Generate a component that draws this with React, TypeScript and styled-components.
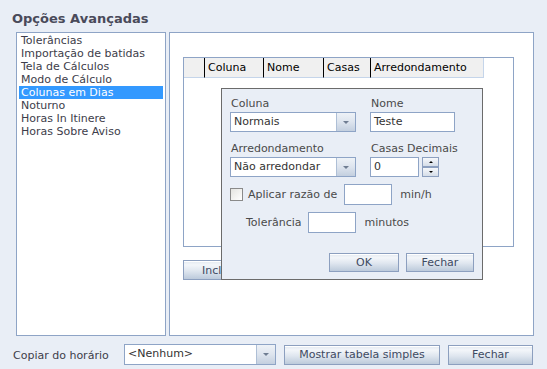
import React from 'react';
import styled, { createGlobalStyle } from 'styled-components';

const GlobalStyle = createGlobalStyle`
  html, body {
    margin: 0;
    padding: 0;
    background: #e9eef6;
  }
  * {
    box-sizing: border-box;
  }
`;

const Root = styled.div`
  width: 547px;
  height: 369px;
  background: #e9eef6;
  display: flex;
  flex-direction: column;
  font-family: 'DejaVu Sans', Verdana, sans-serif;
  font-size: 11px;
  color: #3d3d4a;
  overflow: hidden;
`;

const Title = styled.h1`
  margin: 0;
  padding: 11px 0 0 12px;
  height: 32px;
  font-size: 13px;
  line-height: 16px;
  font-weight: 700;
  color: #4a4a5a;
`;

const Main = styled.div`
  display: flex;
  column-gap: 3px;
  margin-left: 16px;
  height: 304px;
`;

const OptionList = styled.ul`
  list-style: none;
  margin: 0;
  width: 150px;
  height: 100%;
  padding: 1px 2px;
  background: #fff;
  border: 1px solid #8ea4c6;
`;

const OptionItem = styled.li<{ $selected?: boolean }>`
  height: 13px;
  line-height: 13px;
  padding-left: 2px;
  white-space: nowrap;
  background: ${(p) => (p.$selected ? '#3399ff' : 'transparent')};
  color: ${(p) => (p.$selected ? '#fff' : '#3d3d4a')};
`;

const Panel = styled.div`
  position: relative;
  width: 365px;
  height: 100%;
  padding: 24px 0 0 13px;
  background: #fff;
  border: 1px solid #8ea4c6;
`;

const Grid = styled.div`
  width: 331px;
  height: 190px;
  border: 1px solid #8ea4c6;
  background: #fff;
`;

const HeaderRow = styled.div`
  display: flex;
  height: 20px;
`;

const HeaderCell = styled.div<{ $width: number; $first?: boolean }>`
  flex: none;
  width: ${(p) => p.$width}px;
  height: 20px;
  line-height: 19px;
  padding-left: 3px;
  background: #f0f0f0;
  color: #000;
  border-left: ${(p) => (p.$first ? 'none' : '1px solid #000')};
  border-bottom: 1px solid #c5d5ea;
  white-space: nowrap;
  &:last-child {
    border-right: 1px solid #c5d5ea;
  }
`;

const Button = styled.button<{ $width: number }>`
  width: ${(p) => p.$width}px;
  height: 19px;
  padding: 0;
  font-family: 'DejaVu Sans', Verdana, sans-serif;
  font-size: 11px;
  color: #3e4a62;
  border: 1px solid #8c9fbf;
  box-shadow: inset 0 1px 0 #fff;
  background: linear-gradient(
    to bottom,
    #e2e8f0 0%,
    #f3f6fa 22%,
    #dfe6ef 55%,
    #bccadb 100%
  );
`;

const IncludeButton = styled(Button)`
  display: block;
  margin-top: 13px;
  height: 20px;
  text-align: left;
  padding-left: 18px;
`;

const Dialog = styled.div`
  position: absolute;
  left: 51px;
  top: 55px;
  width: 262px;
  height: 192px;
  border: 1px solid #6b6b6b;
  background: #e9eef6;
  padding: 8px 8px 7px 8px;
  display: flex;
  flex-direction: column;
`;

const FieldGrid = styled.div`
  display: grid;
  grid-template-columns: 126px 1fr;
  column-gap: 14px;
  row-gap: 10px;
`;

const Field = styled.div`
  display: flex;
  flex-direction: column;
  row-gap: 2px;
`;

const Label = styled.span`
  display: block;
  height: 13px;
  line-height: 13px;
  padding-left: 1px;
  color: #4a4a4a;
  white-space: nowrap;
`;

const SelectBox = styled.div<{ $width: number; $height?: number }>`
  display: flex;
  width: ${(p) => p.$width}px;
  height: ${(p) => p.$height ?? 20}px;
  border: 1px solid #8ea4c6;
  background: #fff;
`;

const SelectValue = styled.span`
  flex: 1;
  padding-left: 3px;
  line-height: 18px;
  color: #333;
  white-space: nowrap;
  overflow: hidden;
`;

const DropButton = styled.span`
  width: 19px;
  display: flex;
  align-items: center;
  justify-content: center;
  border-left: 1px solid #aebfd6;
  background: linear-gradient(to bottom, #eef2f7 0%, #dde4ee 50%, #c3cfdf 100%);
  &::after {
    content: '';
    border-left: 3px solid transparent;
    border-right: 3px solid transparent;
    border-top: 3px solid #6f7d92;
  }
`;

const TextInput = styled.div<{ $width: number; $height?: number }>`
  width: ${(p) => p.$width}px;
  height: ${(p) => p.$height ?? 20}px;
  border: 1px solid #8ea4c6;
  background: #fff;
  padding-left: 3px;
  line-height: 18px;
  color: #333;
`;

const SpinRow = styled.div`
  display: flex;
  column-gap: 3px;
`;

const Spinner = styled.div`
  display: flex;
  flex-direction: column;
  width: 17px;
  height: 20px;
`;

const SpinButton = styled.span<{ $up?: boolean }>`
  flex: 1;
  display: flex;
  align-items: center;
  justify-content: center;
  border: 1px solid #8c9fbf;
  background: linear-gradient(to bottom, #f6f8fb, #d5dde8);
  &::after {
    content: '';
    border-left: 2px solid transparent;
    border-right: 2px solid transparent;
    ${(p) => (p.$up ? 'border-bottom: 2px solid #000;' : 'border-top: 2px solid #000;')}
  }
`;

const OptionRow = styled.div<{ $indent?: number }>`
  display: flex;
  align-items: center;
  margin-top: 7px;
  padding-left: ${(p) => p.$indent ?? 0}px;
  color: #4a4a4a;
  white-space: nowrap;
`;

const Checkbox = styled.span`
  width: 13px;
  height: 13px;
  border: 1px solid #8a8a8a;
  background: linear-gradient(135deg, #e4e4e0, #fff);
  margin-right: 5px;
`;

const InlineInput = styled(TextInput)`
  margin: 0 8px 0 7px;
`;

const DialogActions = styled.div`
  margin-top: auto;
  display: flex;
  justify-content: flex-end;
  column-gap: 7px;
`;

const Footer = styled.div`
  display: flex;
  align-items: center;
  margin-top: 8px;
  padding-left: 12px;
  height: 21px;
`;

const FooterLabel = styled.span`
  width: 112px;
  padding-left: 1px;
  line-height: 21px;
  padding-top: 2px;
  color: #3d3d4a;
  white-space: nowrap;
`;

const FooterButton = styled(Button)`
  height: 20px;
  margin-left: 8px;
`;

const options = [
  'Tolerâncias',
  'Importação de batidas',
  'Tela de Cálculos',
  'Modo de Cálculo',
  'Colunas em Dias',
  'Noturno',
  'Horas In Itinere',
  'Horas Sobre Aviso',
];

const columns = [
  { label: '', width: 20 },
  { label: 'Coluna', width: 59 },
  { label: 'Nome', width: 60 },
  { label: 'Casas', width: 47 },
  { label: 'Arredondamento', width: 114 },
];

function App() {
  return (
    <Root>
      <GlobalStyle />
      <Title>Opções Avançadas</Title>
      <Main>
        <OptionList>
          {options.map((o) => (
            <OptionItem key={o} $selected={o === 'Colunas em Dias'}>
              {o}
            </OptionItem>
          ))}
        </OptionList>
        <Panel>
          <Grid>
            <HeaderRow>
              {columns.map((c, i) => (
                <HeaderCell key={i} $width={c.width} $first={i === 0}>
                  {c.label}
                </HeaderCell>
              ))}
            </HeaderRow>
          </Grid>
          <IncludeButton $width={90}>Incluir</IncludeButton>

          <Dialog>
            <FieldGrid>
              <Field>
                <Label>Coluna</Label>
                <SelectBox $width={126}>
                  <SelectValue>Normais</SelectValue>
                  <DropButton />
                </SelectBox>
              </Field>
              <Field>
                <Label>Nome</Label>
                <TextInput $width={85}>Teste</TextInput>
              </Field>
              <Field>
                <Label>Arredondamento</Label>
                <SelectBox $width={126}>
                  <SelectValue>Não arredondar</SelectValue>
                  <DropButton />
                </SelectBox>
              </Field>
              <Field>
                <Label>Casas Decimais</Label>
                <SpinRow>
                  <TextInput $width={49}>0</TextInput>
                  <Spinner>
                    <SpinButton $up />
                    <SpinButton />
                  </Spinner>
                </SpinRow>
              </Field>
            </FieldGrid>
            <OptionRow>
              <Checkbox />
              Aplicar razão de
              <InlineInput $width={48} $height={21} />
              min/h
            </OptionRow>
            <OptionRow $indent={16}>
              Tolerância
              <InlineInput $width={48} $height={21} />
              minutos
            </OptionRow>
            <DialogActions>
              <Button $width={70}>OK</Button>
              <Button $width={68}>Fechar</Button>
            </DialogActions>
          </Dialog>
        </Panel>
      </Main>
      <Footer>
        <FooterLabel>Copiar do horário</FooterLabel>
        <SelectBox $width={152} $height={21}>
          <SelectValue>&lt;Nenhum&gt;</SelectValue>
          <DropButton />
        </SelectBox>
        <FooterButton $width={156}>Mostrar tabela simples</FooterButton>
        <FooterButton $width={85}>Fechar</FooterButton>
      </Footer>
    </Root>
  );
}

export default App;
